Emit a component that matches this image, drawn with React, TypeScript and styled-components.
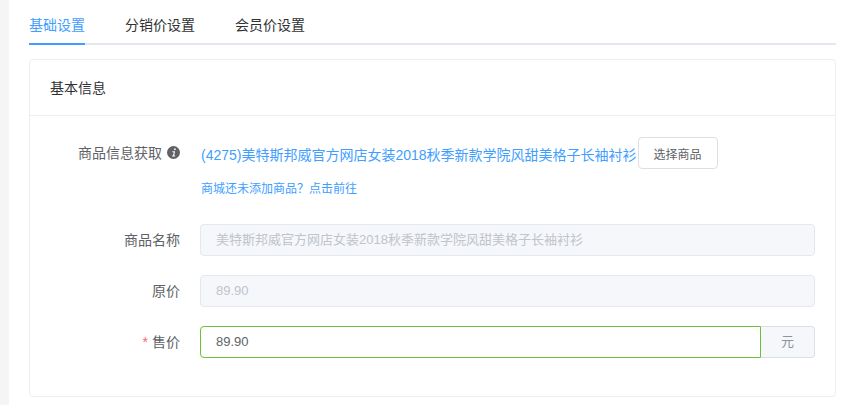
import React from "react";
import styled, { createGlobalStyle } from "styled-components";

const Global = createGlobalStyle`
  html, body { margin: 0; padding: 0; background: #f5f5f5; }
  body { font-family: "Liberation Sans", Arial, "Noto Sans CJK SC", sans-serif; font-size: 13px; color: #606266; }
  * { box-sizing: border-box; }
`;

const Page = styled.div`
  margin-left: 9px;
  width: 838px;
  height: 405px;
  background: #fff;
  padding: 0 11px 0 20px;
  overflow: hidden;
`;

const Tabs = styled.div`
  display: flex;
  height: 45px;
  border-bottom: 2px solid #e4e7ed;
`;

const Tab = styled.div<{ $active?: boolean }>`
  height: 45px;
  padding-top: 16px;
  line-height: 18px;
  font-size: 14px;
  margin-right: 40px;
  color: ${(p) => (p.$active ? "#409eff" : "#303133")};
  border-bottom: 2px solid ${(p) => (p.$active ? "#409eff" : "transparent")};
`;

const Card = styled.div`
  margin-top: 14px;
  height: 338px;
  border: 1px solid #ebeef5;
  border-radius: 4px;
`;

const CardHead = styled.div`
  height: 56px;
  padding: 19px 20px 0;
  line-height: 18px;
  font-size: 14px;
  color: #303133;
  border-bottom: 1px solid #ebeef5;
`;

const CardBody = styled.div`
  display: flex;
  flex-direction: column;
  padding: 21px 20px 0 0;
`;

const Row = styled.div<{ $gap?: number }>`
  display: flex;
  margin-bottom: ${(p) => p.$gap ?? 19}px;
`;

const Label = styled.div`
  width: 170px;
  flex: none;
  display: flex;
  justify-content: flex-end;
  align-items: flex-start;
  height: 32px;
  line-height: 32px;
  padding-right: 20px;
  font-size: 14px;
  color: #606266;
`;

const Star = styled.span`
  color: #f56c6c;
  margin-right: 4px;
  font-size: 14px;
`;

const InfoIcon = styled.svg`
  width: 13px;
  height: 13px;
  margin: 9px 0 0 5px;
  flex: none;
`;

const Field = styled.div`
  flex: 1;
  min-width: 0;
`;

const PickLine = styled.div`
  display: flex;
  align-items: center;
  height: 32px;
`;

const GoodsName = styled.span`
  font-size: 14px;
  color: #409eff;
  margin-left: 1px;
  padding-top: 1px;
  white-space: nowrap;
`;

const PickButton = styled.button`
  width: 80px;
  height: 32px;
  margin-left: 1px;
  padding: 0;
  background: #fff;
  border: 1px solid #dcdfe6;
  border-radius: 4px;
  font: inherit;
  font-size: 12px;
  color: #606266;
`;

const Hint = styled.div`
  margin: 11px 0 0 1px;
  line-height: 18px;
  font-size: 12px;
  color: #409eff;
`;

const InputBox = styled.div<{ $disabled?: boolean; $focus?: boolean }>`
  height: 32px;
  flex: 1;
  padding-left: 15px;
  line-height: 30px;
  font-size: 13px;
  border: 1px solid ${(p) => (p.$focus ? "#67c23a" : "#e4e7ed")};
  border-radius: ${(p) => (p.$focus ? "4px 0 0 4px" : "4px")};
  background: ${(p) => (p.$disabled ? "#f5f7fa" : "#fff")};
  color: ${(p) => (p.$disabled ? "#c0c4cc" : "#606266")};
`;

const Group = styled.div`
  display: flex;
  width: 615px;
`;

const Addon = styled.div`
  width: 54px;
  flex: none;
  height: 32px;
  line-height: 30px;
  text-align: center;
  font-size: 13px;
  color: #909399;
  background: #f5f7fa;
  border: 1px solid #dcdfe6;
  border-left: none;
  border-radius: 0 4px 4px 0;
`;

const NAME = "美特斯邦威官方网店女装2018秋季新款学院风甜美格子长袖衬衫";

export default function App() {
  return (
    <>
      <Global />
      <Page>
        <Tabs>
          <Tab $active>基础设置</Tab>
          <Tab>分销价设置</Tab>
          <Tab>会员价设置</Tab>
        </Tabs>
        <Card>
          <CardHead>基本信息</CardHead>
          <CardBody>
            <Row $gap={26}>
              <Label>
                商品信息获取
                <InfoIcon viewBox="0 0 13 13">
                  <circle cx="6.5" cy="6.5" r="6.5" fill="#606266" />
                  <path d="M7.3 2.4h1.6L8.6 4H7zM5.1 5.2h2.9L7.2 9.5h1l-.2 1H5l.2-1h.9l.6-3.3h-.8z" fill="#fff" />
                </InfoIcon>
              </Label>
              <Field>
                <PickLine>
                  <GoodsName>(4275){NAME}</GoodsName>
                  <PickButton>选择商品</PickButton>
                </PickLine>
                <Hint>商城还未添加商品？点击前往</Hint>
              </Field>
            </Row>
            <Row>
              <Label>商品名称</Label>
              <Group>
                <InputBox $disabled>{NAME}</InputBox>
              </Group>
            </Row>
            <Row>
              <Label>原价</Label>
              <Group>
                <InputBox $disabled>89.90</InputBox>
              </Group>
            </Row>
            <Row>
              <Label>
                <Star>*</Star>售价
              </Label>
              <Group>
                <InputBox $focus>89.90</InputBox>
                <Addon>元</Addon>
              </Group>
            </Row>
          </CardBody>
        </Card>
      </Page>
    </>
  );
}
